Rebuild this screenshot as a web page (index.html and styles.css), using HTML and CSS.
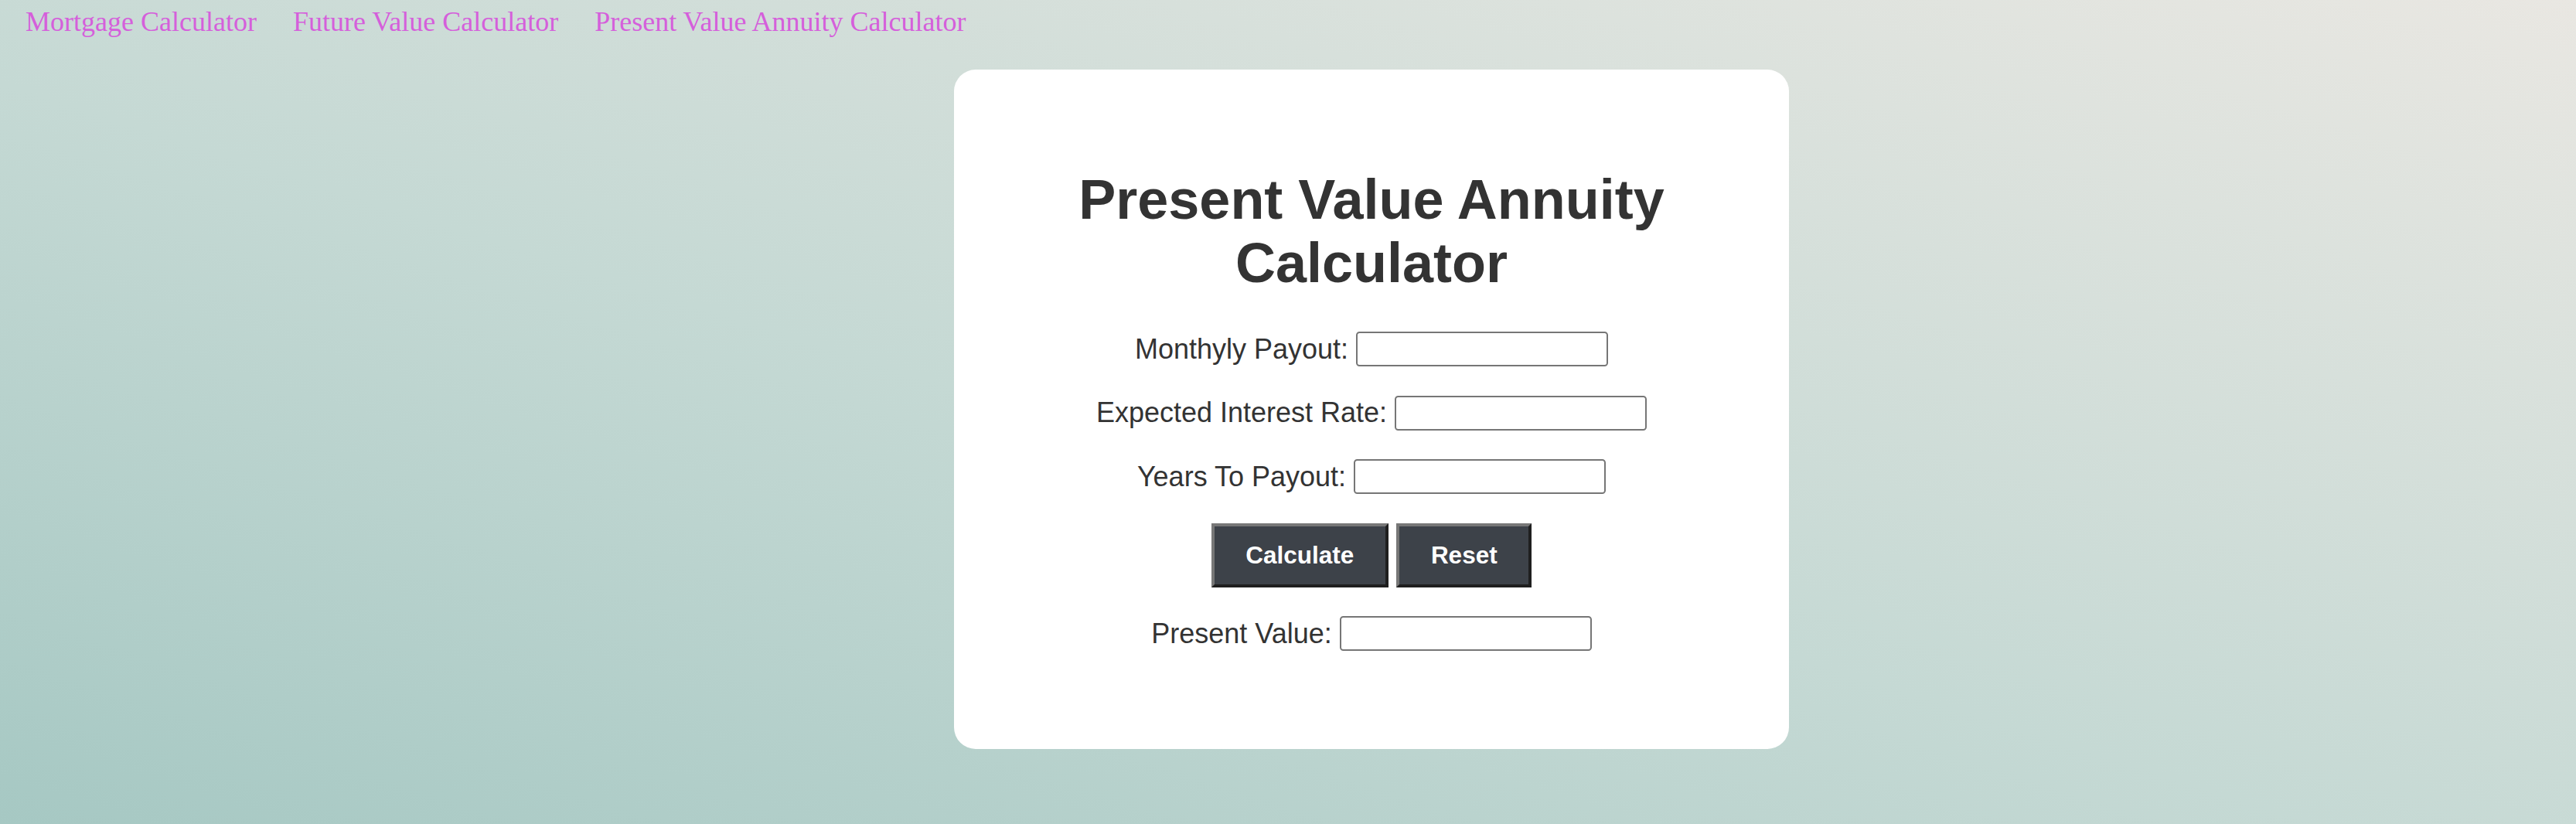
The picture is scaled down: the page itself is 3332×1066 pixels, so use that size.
FILE: index.html
```html
<!DOCTYPE html>
<html lang="en">
<head>
<meta charset="utf-8">
<title>Present Value Annuity Calculator</title>
<link rel="stylesheet" href="styles.css">
</head>
<body>
<nav class="nav">
  <a class="nav-link" href="#">Mortgage Calculator</a>
  <a class="nav-link" href="#">Future Value Calculator</a>
  <a class="nav-link" href="#">Present Value Annuity Calculator</a>
</nav>
<main class="main">
  <section class="card">
    <h1 class="title">Present Value Annuity Calculator</h1>
    <form class="form">
      <div class="row">
        <label class="label" for="payout">Monthyly Payout:</label>
        <input class="field" id="payout" type="text">
      </div>
      <div class="row">
        <label class="label" for="rate">Expected Interest Rate:</label>
        <input class="field" id="rate" type="text">
      </div>
      <div class="row">
        <label class="label" for="years">Years To Payout:</label>
        <input class="field" id="years" type="text">
      </div>
      <div class="row buttons">
        <button class="btn" type="button">Calculate</button>
        <button class="btn" type="reset">Reset</button>
      </div>
      <div class="row">
        <label class="label" for="pv">Present Value:</label>
        <input class="field" id="pv" type="text">
      </div>
    </form>
  </section>
</main>
</body>
</html>
```
FILE: styles.css
```css
html, body {
  margin: 0;
  padding: 0;
}
body {
  min-height: 1066px;
  background: linear-gradient(to top right, #a6c8c3 0%, #c5d9d4 45%, #e9e7e2 100%);
  font-family: "Liberation Sans", Arial, sans-serif;
  color: #333;
}
.nav {
  display: flex;
  gap: 47px;
  padding: 7px 0 0 33px;
  font-family: "Liberation Serif", "Times New Roman", serif;
  font-size: 36px;
}
.nav-link {
  color: #d55fdb;
  text-decoration: none;
}
.main {
  display: flex;
  justify-content: center;
  padding: 41px 0 0 216px;
}
.card {
  box-sizing: border-box;
  width: 1080px;
  background: #fff;
  border-radius: 28px;
  padding: 127px 0 127px;
}
.title {
  margin: 0 0 48px;
  text-align: center;
  font-size: 72px;
  font-weight: bold;
  color: #333;
  line-height: normal;
}
.form {
  display: flex;
  flex-direction: column;
  align-items: center;
  gap: 37.5px;
}
.row {
  display: flex;
  align-items: center;
  justify-content: center;
  gap: 10px;
}
.label {
  font-size: 36px;
  color: #333;
}
.field {
  box-sizing: border-box;
  width: 326px;
  height: 45px;
  border: 2.25px solid #767676;
  border-radius: 4.5px;
  background: #fff;
  margin: 0;
}
.buttons {
  gap: 10.5px;
}
.btn {
  font-family: "Liberation Sans", Arial, sans-serif;
  font-weight: bold;
  font-size: 31.5px;
  line-height: 36px;
  color: #fff;
  background: #3d4249;
  border: 4.5px solid;
  border-color: #777 #1f1f1f #1f1f1f #777;
  padding: 19.5px 40.5px;
  margin: 0;
  border-radius: 0;
}
```
